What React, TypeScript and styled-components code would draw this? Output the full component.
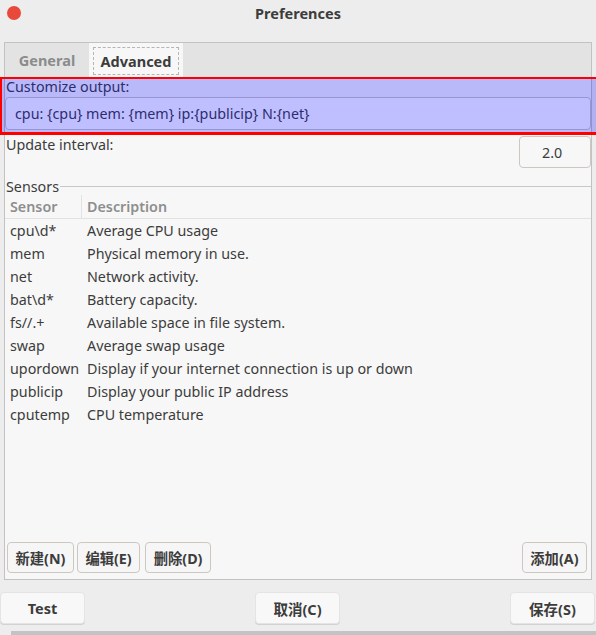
import React from "react";
import styled, { createGlobalStyle } from "styled-components";

const FS = "14.3px";

const Global = createGlobalStyle`
  html, body { margin: 0; padding: 0; }
  body {
    width: 596px; height: 635px; overflow: hidden; background: #ededed;
    font-family: "Noto Sans", "Noto Sans CJK SC", sans-serif;
    color: #3c3c3c;
  }
  * { box-sizing: border-box; }
`;

const Window = styled.div`
  width: 596px; height: 635px; background: #ededed;
  display: flex; flex-direction: column; overflow: hidden;
  & > * { flex-shrink: 0; }
`;

const TitleBar = styled.div`
  height: 42px; display: grid; grid-template-columns: 40px 1fr 40px;
  align-items: start;
`;

const CloseDot = styled.span`
  width: 14px; height: 14px; border-radius: 50%; background: #e9493b;
  margin: 6px 0 0 7px; display: block;
`;

const Title = styled.div`
  text-align: center; font-weight: 700; font-size: 14.5px; line-height: 27px;
  color: #3c3c3c;
`;

const Notebook = styled.div`
  margin: 0 4px; display: flex; flex-direction: column;
`;

const TabBar = styled.div`
  height: 35px; background: #e3e3e3; border: 1px solid #c2c2c2; border-bottom: none;
  display: flex; align-items: stretch;
`;

const Tab = styled.div<{ $active?: boolean }>`
  width: ${(p) => (p.$active ? "94px" : "84px")};
  display: flex; align-items: center; justify-content: center;
  font-weight: 700; font-size: 14.5px;
  color: ${(p) => (p.$active ? "#3c3c3c" : "#8b8b8b")};
  background: ${(p) => (p.$active ? "#f7f7f7" : "transparent")};
  padding-bottom: 1px;
`;

const FocusRing = styled.span`
  width: 86px; height: 28px; margin-top: 3px; border: 1px dashed #b5b5b5;
  display: flex; align-items: center; justify-content: center;
`;

const Page = styled.div`
  background: #f7f7f7; border: 1px solid #c2c2c2; border-top: none;
  height: 503px; display: flex; flex-direction: column;
  & > * { flex-shrink: 0; }
`;

const Section = styled.div`
  position: relative; height: 58px; display: flex; flex-direction: column;
`;

const Highlight = styled.div`
  position: absolute; top: 0; bottom: 0; left: -5px; right: -12px;
  background: rgba(0, 0, 255, 0.25); border: 2px solid #ff0000; border-bottom-width: 3px;
  pointer-events: none;
`;

const Label = styled.div`
  font-size: ${FS}; line-height: 20px; padding-left: 1px; height: 20px;
`;

const Entry = styled.div`
  height: 33px; border: 1px solid #cdc7c2; border-radius: 4px; background: #ffffff;
  display: flex; align-items: center; padding-left: 9px; font-size: ${FS};
`;

const IntervalRow = styled.div`
  display: flex; justify-content: space-between; align-items: flex-start;
  height: 43px;
`;

const Spin = styled.div`
  width: 72px; height: 32px; margin-top: 1px; border: 1px solid #cdc7c2; border-radius: 4px;
  display: flex; align-items: center; padding-left: 22px;
  font-size: ${FS};
`;

const Frame = styled.div`
  flex: 1; display: flex; flex-direction: column;
`;

const FrameHead = styled.div`
  display: flex; align-items: center; height: 17px;
`;

const FrameLabel = styled.span`
  font-size: ${FS}; line-height: 17px; padding: 0 1px;
`;

const FrameLine = styled.span`
  flex: 1; height: 1px; background: #c8c8c8;
`;

const Tree = styled.div`
  flex: 1; display: flex; flex-direction: column;
`;

const Row = styled.div<{ $head?: boolean }>`
  display: grid; grid-template-columns: 77px 1fr; height: 23px; align-items: center;
  font-size: ${FS};
  ${(p) =>
    p.$head &&
    `border-bottom: 1px solid #e2e2e2; color: #8e8e8e; font-weight: 600; height: 24px;`}
`;

const Cell = styled.div<{ $sep?: boolean }>`
  padding-left: 5px; height: 100%; display: flex; align-items: center;
  white-space: nowrap;
  ${(p) => p.$sep && `border-right: 1px solid #e2e2e2;`}
`;

const ButtonRow = styled.div`
  display: flex; gap: 3px; padding: 0 4px 6px 2px;
`;

const Btn = styled.button`
  height: 31px; padding: 0 7.5px; border: 1px solid #cdc7c2; border-radius: 4px;
  background: #f6f6f6; color: #3c3c3c; font-weight: 700; font-size: ${FS};
  font-family: "Noto Sans", "Noto Sans CJK SC", sans-serif;
  &:nth-child(3) { margin-left: 2px; }
  &:last-child { margin-left: auto; }
`;

const Footer = styled.div`
  display: flex; justify-content: space-between; margin-top: 12px; padding-right: 1px;
`;

const FootBtn = styled.button`
  width: 85px; height: 32px; border: 1px solid #e4e4e4; border-radius: 4px;
  background: #f8f8f8; box-shadow: 0 1px 0 #d2d2d2;
  color: #3c3c3c; font-weight: 700; font-size: 14.5px;
  font-family: "Noto Sans", "Noto Sans CJK SC", sans-serif;
`;

const Shadow = styled.div`
  margin: 7px 0 0 11px; height: 4px; background: #c3c3c3;
`;

const sensors: [string, string][] = [
  ["cpu\\d*", "Average CPU usage"],
  ["mem", "Physical memory in use."],
  ["net", "Network activity."],
  ["bat\\d*", "Battery capacity."],
  ["fs//.+", "Available space in file system."],
  ["swap", "Average swap usage"],
  ["upordown", "Display if your internet connection is up or down"],
  ["publicip", "Display your public IP address"],
  ["cputemp", "CPU temperature"],
];

export default function App() {
  return (
    <>
      <Global />
      <Window>
        <TitleBar>
          <CloseDot />
          <Title>Preferences</Title>
          <span />
        </TitleBar>
        <Notebook>
          <TabBar>
            <Tab>General</Tab>
            <Tab $active>
              <FocusRing>Advanced</FocusRing>
            </Tab>
          </TabBar>
          <Page>
            <Section>
              <Label>Customize output:</Label>
              <Entry>cpu: {"{cpu}"} mem: {"{mem}"} ip:{"{publicip}"} N:{"{net}"}</Entry>
              <Highlight />
            </Section>
            <IntervalRow>
              <Label>Update interval:</Label>
              <Spin>2.0</Spin>
            </IntervalRow>
            <Frame>
              <FrameHead>
                <FrameLabel>Sensors</FrameLabel>
                <FrameLine />
              </FrameHead>
              <Tree>
                <Row $head>
                  <Cell $sep>Sensor</Cell>
                  <Cell>Description</Cell>
                </Row>
                {sensors.map(([s, d]) => (
                  <Row key={s}>
                    <Cell>{s}</Cell>
                    <Cell>{d}</Cell>
                  </Row>
                ))}
              </Tree>
              <ButtonRow>
                <Btn>新建(N)</Btn>
                <Btn>编辑(E)</Btn>
                <Btn>删除(D)</Btn>
                <Btn>添加(A)</Btn>
              </ButtonRow>
            </Frame>
          </Page>
        </Notebook>
        <Footer>
          <FootBtn>Test</FootBtn>
          <FootBtn>取消(C)</FootBtn>
          <FootBtn>保存(S)</FootBtn>
        </Footer>
        <Shadow />
      </Window>
    </>
  );
}
